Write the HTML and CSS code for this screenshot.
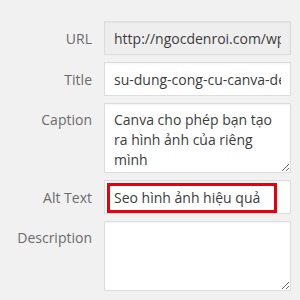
FILE: index.html
```html
<!DOCTYPE html>
<html>
<head>
<meta charset="utf-8">
<link rel="stylesheet" href="styles.css">
</head>
<body>
<div class="form">
  <label class="lbl">URL</label>
  <div class="field"><input class="inp ro" type="text" value="http://ngocdenroi.com/wp-content/uploads/su-dung.jpg" readonly></div>

  <label class="lbl">Title</label>
  <div class="field"><input class="inp" type="text" value="su-dung-cong-cu-canva-de-thiet-ke"></div>

  <label class="lbl lbl-top">Caption</label>
  <div class="field"><textarea class="ta">Canva cho phép bạn tạo ra hình ảnh của riêng mình</textarea></div>

  <label class="lbl">Alt Text</label>
  <div class="field"><input class="inp" type="text" value="Seo hình ảnh hiệu quả"><span class="mark"></span></div>

  <label class="lbl lbl-top">Description</label>
  <div class="field"><textarea class="ta"></textarea></div>
</div>
</body>
</html>
```

FILE: styles.css
```css
html, body {
  margin: 0;
  padding: 0;
  background: #f1f1f1;
  width: 300px;
  height: 300px;
  overflow: hidden;
}
.form {
  display: grid;
  grid-template-columns: 92px 187px;
  column-gap: 12px;
  row-gap: 7px;
  padding-top: 21px;
  font-family: "Open Sans", "Noto Sans", sans-serif;
}
.lbl {
  font-size: 14px;
  color: #6b6b6b;
  text-align: right;
  align-self: center;
}
.lbl-top {
  align-self: start;
  padding-top: 7px;
}
.field {
  position: relative;
  display: flex;
}
.inp, .ta {
  box-sizing: border-box;
  width: 100%;
  margin: 0;
  border: 1px solid #dddddd;
  background: #ffffff;
  font-family: "Open Sans", "Noto Sans", sans-serif;
  font-size: 14px;
  color: #3c3c3c;
  outline: none;
  box-shadow: inset 0 1px 2px rgba(0,0,0,0.05);
}
.inp {
  height: 34px;
  padding: 0 9px;
}
.ro {
  background: #eeeeee;
}
.ta {
  height: 70px;
  padding: 6px 9px;
  line-height: 20px;
  resize: vertical;
  overflow: hidden;
}
.mark {
  position: absolute;
  left: 3px;
  top: 3px;
  width: 170px;
  height: 30px;
  box-sizing: border-box;
  border: 3px solid #e8000b;
  pointer-events: none;
}
```
